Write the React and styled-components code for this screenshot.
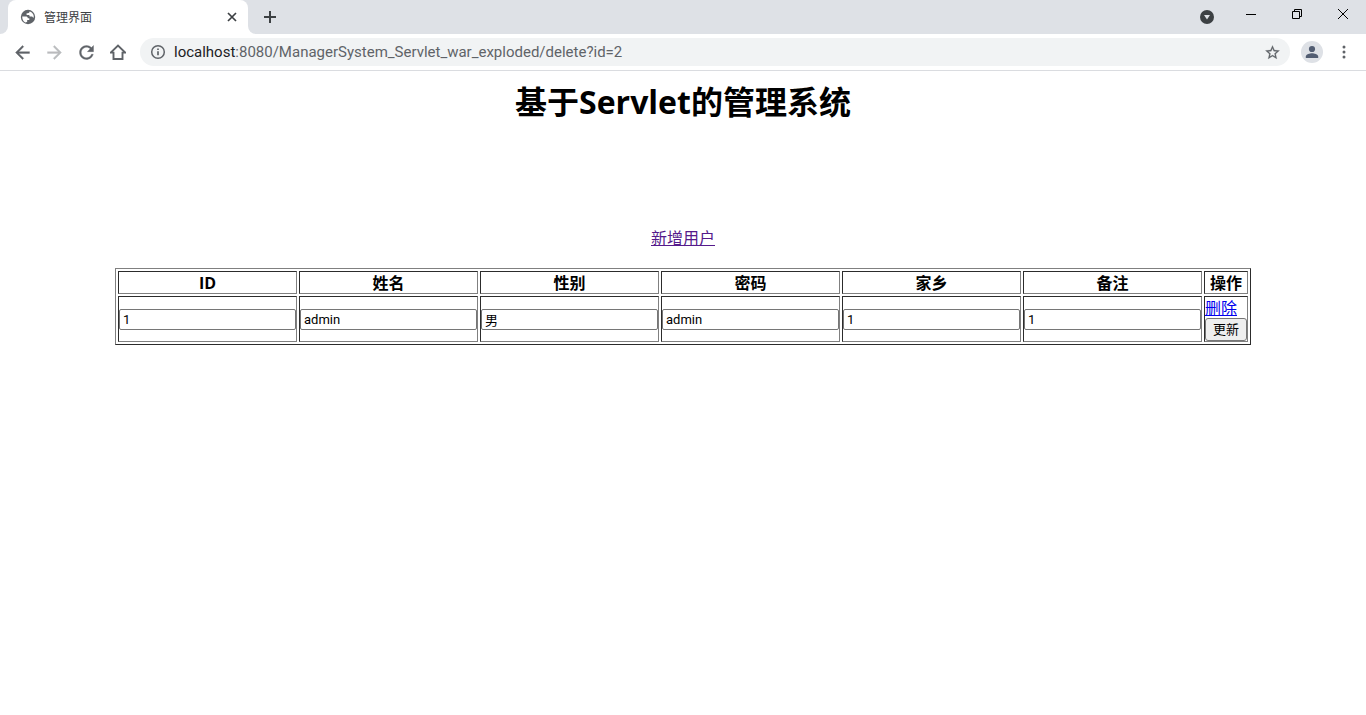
import React from 'react';
import styled, { createGlobalStyle } from 'styled-components';

const Global = createGlobalStyle`
  * { box-sizing: border-box; }
  body {
    margin: 0;
    background: #fff;
    color: #000;
    font-family: 'Open Sans', 'Noto Sans CJK SC', sans-serif;
    font-size: 16px;
    line-height: 19px;
  }
`;

const TabStrip = styled.header`
  display: flex;
  height: 34px;
  background: #dee1e6;
`;

const LeftEdge = styled.div`
  width: 8px;
  background: #fff;
  &::before {
    content: '';
    display: block;
    height: 34px;
    background: #dee1e6;
    border-bottom-right-radius: 8px;
  }
`;

const Tab = styled.div`
  display: flex;
  align-items: center;
  width: 240px;
  padding: 0 8px 0 12px;
  background: #fff;
  border-radius: 8px 8px 0 0;
`;

const TabTitle = styled.span`
  flex: 1;
  margin-left: 8px;
  font-size: 12px;
  line-height: 18px;
  padding-top: 1px;
  color: #3c4043;
`;

const AfterTab = styled.div`
  flex: 1;
  display: flex;
  background: #fff;
`;

const AfterTabInner = styled.div`
  flex: 1;
  display: flex;
  justify-content: space-between;
  background: #dee1e6;
  border-bottom-left-radius: 8px;
`;

const IconButton = styled.button`
  display: flex;
  align-items: center;
  justify-content: center;
  width: ${(p) => p.$w || 32}px;
  height: ${(p) => p.$h || 34}px;
  padding: 0;
  border: 0;
  background: none;
  color: ${(p) => p.$color || '#5f6368'};
`;

const WindowControls = styled.div`
  display: flex;
`;

const Toolbar = styled.nav`
  display: flex;
  align-items: center;
  height: 37px;
  padding: 0 6px;
  background: #fff;
  border-bottom: 1px solid #dadce0;
`;

const AddressBar = styled.div`
  flex: 1;
  display: flex;
  align-items: center;
  height: 28px;
  margin: 0 6px;
  padding: 0 2px 0 10px;
  border-radius: 14px;
  background: #f1f3f4;
`;

const Url = styled.span`
  flex: 1;
  margin-left: 8px;
  font-family: Roboto, sans-serif;
  font-size: 15px;
  line-height: 20px;
  color: #5f6368;
  white-space: nowrap;
`;

const Host = styled.span`
  color: #202124;
`;

const Avatar = styled.span`
  display: flex;
  width: 22px;
  height: 22px;
  border-radius: 50%;
  background: #dee1e6;
`;

const Page = styled.main`
  display: flex;
  flex-direction: column;
  align-items: center;
  padding: 8px;
`;

const Title = styled.h1`
  margin: 0;
  font-size: 32px;
  line-height: 46px;
  font-weight: 700;
`;

const AddLink = styled.a`
  margin: 104px 0 20px;
  color: #551a8b;
`;

const UserTable = styled.table`
  border: 1px outset gray;
  border-spacing: 2px;
`;

const HeadCell = styled.th`
  padding: 2px 0 0;
  border: 1px inset gray;
  text-align: center;
  font-weight: 700;
`;

const Cell = styled.td`
  padding: 0;
  border: 1px inset gray;
  vertical-align: middle;
`;

const Field = styled.input`
  display: block;
  width: 177px;
  height: 21px;
  padding: 1px 3px;
  border: 1px solid #767676;
  border-radius: 2px;
  background: #fff;
  color: #000;
  font-family: Roboto, 'Noto Sans CJK SC', sans-serif;
  font-size: 13px;
  line-height: 17px;
`;

const DeleteLink = styled.a`
  display: block;
  padding-top: 2px;
  color: #0000ee;
`;

const UpdateButton = styled.button`
  display: block;
  width: 42px;
  height: 23px;
  padding: 0;
  border: 1px solid #767676;
  border-radius: 3px;
  background: #efefef;
  color: #000;
  font-family: inherit;
  font-size: 13px;
  line-height: 19px;
`;

const Svg = ({ size = 21, box = 24, children }) => (
  <svg width={size} height={size} viewBox={`0 0 ${box} ${box}`} fill="currentColor" aria-hidden="true">
    {children}
  </svg>
);

const columns = ['ID', '姓名', '性别', '密码', '家乡', '备注', '操作'];
const users = [['1', 'admin', '男', 'admin', '1', '1']];

export default function App() {
  return (
    <>
      <Global />
      <TabStrip>
        <LeftEdge />
        <Tab>
          <Svg size={16} box={16}>
            <circle cx="8" cy="8" r="7.200" fill="#5f6368" />
            <path fill="#fff" d="M2.200 7.600h3.600c1.300 0 2 .7 2 1.700h1.500v1.700H7.200v1.800c-.6.400-1.300.8-2 .800C3.400 12.500 2.200 10.400 2.200 7.600zM9.500 2.500c0 1.200-.6 1.700-1.700 1.700H6.600v1.700h1.900c.9 0 1.200.7 1.200 1.500h1.700c.9 0 1.400.5 1.600 1.200l.7.100C14.200 5.700 12.300 3.200 9.500 2.500z" />
          </Svg>
          <TabTitle>管理界面</TabTitle>
          <IconButton $w={16} $color="#3c4043" aria-label="关闭标签页">
            <svg width="10" height="10" viewBox="0 0 10 10" stroke="currentColor" strokeWidth="1.7"><path d="M1 1l8 8M9 1l-8 8" /></svg>
          </IconButton>
        </Tab>
        <AfterTab>
          <AfterTabInner>
            <IconButton $w={44} $color="#3c4043" aria-label="新标签页">
              <svg width="12" height="12" viewBox="0 0 12 12" stroke="currentColor" strokeWidth="2"><path d="M6 0v12M0 6h12" /></svg>
            </IconButton>
            <WindowControls>
              <IconButton $w={42} $color="#3c4043" aria-label="搜索标签页">
                <svg width="14" height="14" viewBox="0 0 14 14"><circle cx="7" cy="7" r="7" fill="currentColor" /><path d="M4 5h6L7 9.500z" fill="#dee1e6" /></svg>
              </IconButton>
              <IconButton $w={46} $h={28} $color="#000" aria-label="最小化">
                <svg width="10" height="10" viewBox="0 0 10 10" fill="currentColor"><path d="M0 5h10v1H0z" /></svg>
              </IconButton>
              <IconButton $w={46} $h={28} $color="#000" aria-label="还原">
                <svg width="10" height="10" viewBox="0 0 10 10" fill="none" stroke="currentColor"><path d="M.5 2.500h7v7h-7zM2.500 2.500v-2h7v7h-2" /></svg>
              </IconButton>
              <IconButton $w={46} $h={28} $color="#000" aria-label="关闭">
                <svg width="10" height="10" viewBox="0 0 10 10" stroke="currentColor"><path d="M0 0l10 10M10 0L0 10" /></svg>
              </IconButton>
            </WindowControls>
          </AfterTabInner>
        </AfterTab>
      </TabStrip>
      <Toolbar>
        <IconButton aria-label="后退">
          <Svg><path stroke="currentColor" strokeWidth=".4" d="M20 11H7.830l5.590-5.590L12 4l-8 8 8 8 1.410-1.410L7.830 13H20v-2z" /></Svg>
        </IconButton>
        <IconButton $color="#babcbe" aria-label="前进">
          <Svg><path stroke="currentColor" strokeWidth=".4" d="M12 4l-1.410 1.410L16.170 11H4v2h12.170l-5.580 5.590L12 20l8-8z" /></Svg>
        </IconButton>
        <IconButton aria-label="重新加载">
          <Svg><path stroke="currentColor" strokeWidth=".4" d="M17.650 6.350C16.200 4.900 14.210 4 12 4c-4.420 0-7.990 3.580-7.990 8s3.570 8 7.990 8c3.730 0 6.840-2.550 7.730-6h-2.080c-.82 2.330-3.040 4-5.650 4-3.310 0-6-2.690-6-6s2.690-6 6-6c1.660 0 3.140.69 4.220 1.780L13 11h7V4l-2.350 2.350z" /></Svg>
        </IconButton>
        <IconButton aria-label="主页">
          <svg width="16" height="16" viewBox="0 0 16 16" fill="none" stroke="currentColor" strokeWidth="1.900"><path d="M.8 8.600H3.500V15h9V8.600h2.700L8 1.500z" /></svg>
        </IconButton>
        <AddressBar>
          <svg width="16" height="16" viewBox="0 0 16 16" fill="none" stroke="#5f6368" strokeWidth="1.500"><circle cx="8" cy="8" r="6.300" /><path strokeWidth="1.700" d="M8 7.200v4M8 4.500v1.600" /></svg>
          <Url><Host>localhost</Host>:8080/ManagerSystem_Servlet_war_exploded/delete?id=2</Url>
          <IconButton $h={28} aria-label="为此标签页添加书签">
            <Svg size={17}><path stroke="currentColor" strokeWidth=".3" d="M22 9.240l-7.190-.62L12 2 9.190 8.630 2 9.240l5.460 4.730L5.820 21 12 17.270 18.180 21l-1.630-7.030L22 9.240zM12 15.400l-3.760 2.270 1-4.280-3.320-2.880 4.380-.38L12 6.100l1.710 4.040 4.380.38-3.320 2.880 1 4.280L12 15.400z" /></Svg>
          </IconButton>
        </AddressBar>
        <IconButton $color="#525d72" aria-label="用户">
          <Avatar><Svg size={22} box={22}><circle cx="11" cy="8" r="3.100" /><path d="M4.800 17v-1.500c0-2.100 4.100-3.200 6.200-3.200s6.200 1.100 6.200 3.200V17z" /></Svg></Avatar>
        </IconButton>
        <IconButton aria-label="菜单">
          <Svg size={16} box={16}><circle cx="8" cy="3" r="1.500" /><circle cx="8" cy="8" r="1.500" /><circle cx="8" cy="13" r="1.500" /></Svg>
        </IconButton>
      </Toolbar>
      <Page>
        <Title>基于Servlet的管理系统</Title>
        <AddLink href="#add">新增用户</AddLink>
        <UserTable>
          <thead>
            <tr>{columns.map((c) => <HeadCell key={c} scope="col">{c}</HeadCell>)}</tr>
          </thead>
          <tbody>
            {users.map((user) => (
              <tr key={user[0]}>
                {user.map((value, i) => (
                  <Cell key={columns[i]}><Field aria-label={columns[i]} defaultValue={value} /></Cell>
                ))}
                <Cell>
                  <DeleteLink href="#delete">删除</DeleteLink>
                  <UpdateButton type="submit">更新</UpdateButton>
                </Cell>
              </tr>
            ))}
          </tbody>
        </UserTable>
      </Page>
    </>
  );
}
